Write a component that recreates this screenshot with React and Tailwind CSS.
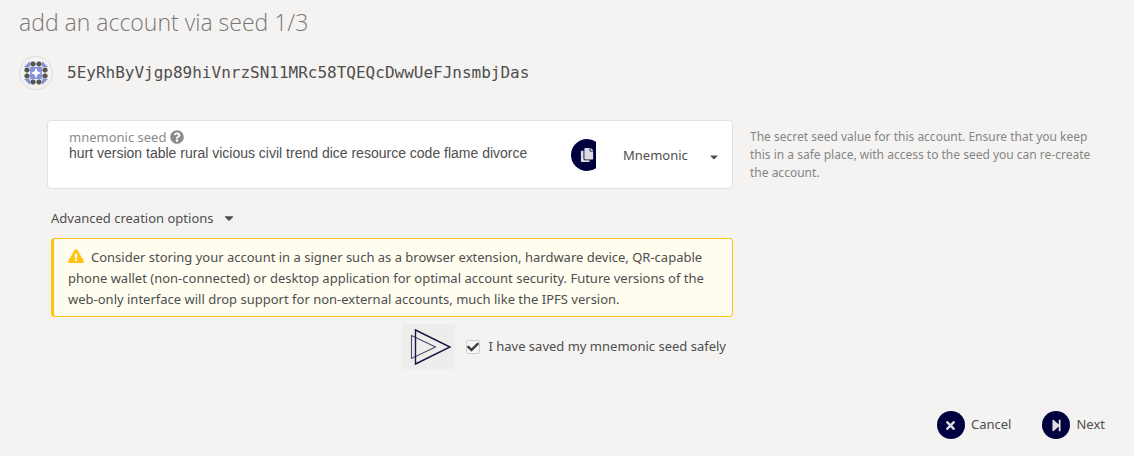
import { useState } from "react";
import {
  FaQuestionCircle,
  FaCopy,
  FaExclamationTriangle,
  FaTimes,
  FaStepForward,
  FaCaretDown,
  FaCheck,
} from "react-icons/fa";

const ADDRESS = "5EyRhByVjgp89hiVnrzSN11MRc58TQEQcDwwUeFJnsmbjDas";
const SEED = "hurt version table rural vicious civil trend dice resource code flame divorce";

const DOTS = [
  [9, 3], [15, 3], [3, 9], [21, 9],
  [3, 15], [21, 15], [9, 21], [15, 21],
];

function Identicon() {
  return (
    <span className="flex size-[34px] shrink-0 items-center justify-center rounded-full border border-[#dddddd] bg-[#f4f3f2]">
      <svg className="size-6" viewBox="0 0 24 24" aria-hidden="true">
        <g fill="#8593dc">
          <path d="M6 0V6H0Z" />
          <path d="M18 0V6H24Z" />
          <path d="M6 24V18H0Z" />
          <path d="M18 24V18H24Z" />
          <path d="M6 6H18V18H6Z" />
        </g>
        <g fill="#555555">
          {DOTS.map(([x, y]) => (
            <path key={`${x}-${y}`} d={`M${x - 1} ${y - 2.6}h2l1.6 1.6v2l-1.6 1.6h-2l-1.6 -1.6v-2Z`} />
          ))}
        </g>
        <path d="M12 6.8L13.6 10.4L17.2 12L13.6 13.6L12 17.2L10.4 13.6L6.8 12L10.4 10.4Z" fill="#fff" />
      </svg>
    </span>
  );
}

function TriangleLogo() {
  return (
    <span className="flex h-[45px] w-[53px] items-center justify-center bg-[#eeedec]">
      <svg className="h-[45px] w-[53px]" viewBox="0 0 53 45" fill="none" aria-hidden="true">
        <path d="M9.5 11.5L33.5 23L9.5 34.5Z" stroke="#4a4a66" strokeWidth="1.1" />
        <path d="M13.5 6L48 23L13.5 40Z" stroke="#151a45" strokeWidth="1.4" />
      </svg>
    </span>
  );
}

function ActionButton({ icon, children }) {
  return (
    <button type="button" className="flex items-center gap-[6px] text-[#4e4e4e]">
      <span className="flex size-7 items-center justify-center rounded-full bg-[#00003f] text-[#dcdce4]">
        {icon}
      </span>
      {children}
    </button>
  );
}

export default function App() {
  const [saved, setSaved] = useState(true);
  const [seed, setSeed] = useState(SEED);

  return (
    <main className="min-h-screen bg-[#f4f3f2] pt-1 pr-5 pb-4 pl-[19px] font-['Noto_Sans',sans-serif] text-[13px] text-[#4e4e4e]">
      <h1 className="font-['Open_Sans',sans-serif] text-[23px] leading-9 font-light text-[#777777]">
        add an account via seed 1/3
      </h1>

      <div className="mt-4 flex items-center gap-[14px]">
        <Identicon />
        <span className="font-['DejaVu_Sans_Mono',monospace] text-[16px] leading-6">{ADDRESS}</span>
      </div>

      <div className="mt-[30px] ml-7 grid grid-cols-[686fr_364fr] gap-x-[17px]">
        <div className="flex h-[69px] rounded border border-[#dde1eb] bg-white pl-[21px]">
          <div className="min-w-0 flex-1 pt-2">
            <label htmlFor="seed" className="flex items-center gap-1 leading-4 text-[#8b8b8b]">
              mnemonic seed
              <FaQuestionCircle className="size-[14px]" />
            </label>
            <input
              id="seed"
              value={seed}
              onChange={(e) => setSeed(e.target.value)}
              className="block w-full bg-transparent font-['Liberation_Sans',sans-serif] text-[14px] leading-4 outline-none"
            />
          </div>
          <div className="ml-1 flex w-[25px] items-center overflow-hidden">
            <button
              type="button"
              aria-label="Copy seed"
              className="flex size-8 shrink-0 items-center justify-center rounded-full bg-[#00003f] text-[#dcdce4]"
            >
              <FaCopy className="size-[14px]" />
            </button>
          </div>
          <div className="relative ml-[27px] flex w-[109px] items-center">
            <select
              aria-label="Seed type"
              className="w-full appearance-none bg-transparent text-[13px] leading-5 outline-none"
            >
              <option>Mnemonic</option>
              <option>Raw seed</option>
            </select>
            <FaCaretDown className="pointer-events-none absolute right-3 mt-1 size-3" />
          </div>
        </div>
        <p className="pt-2 pr-2 text-[12px] leading-[18px] text-[#858585]">
          The secret seed value for this account. Ensure that you keep this in a safe place, with access to the seed
          you can re-create the account.
        </p>

        <div className="pl-1">
          <button type="button" className="mt-[19px] flex items-center gap-2 leading-5">
            Advanced creation options
            <FaCaretDown className="size-[14px]" />
          </button>
          <article className="mt-[10px] rounded border border-l-[3px] border-[#ffc413] bg-[#fffdf0] px-[14px] pt-2 pb-[6px] leading-[21px]">
            <FaExclamationTriangle className="mr-[7px] inline size-4 align-[-2px] text-[#ffc413]" />
            Consider storing your account in a signer such as a browser extension, hardware device, QR-capable phone
            wallet (non-connected) or desktop application for optimal account security. Future versions of the web-only
            interface will drop support for non-external accounts, much like the IPFS version.
          </article>
          <div className="mt-[7px] flex items-center justify-end gap-[11px] pr-[7px]">
            <TriangleLogo />
            <label className="flex items-center gap-2">
              <span className="relative flex size-[14px]">
                <input
                  type="checkbox"
                  checked={saved}
                  onChange={(e) => setSaved(e.target.checked)}
                  className="size-[14px] appearance-none rounded-[2px] border border-[#d0d0d0] bg-[#f8f7f6]"
                />
                {saved && <FaCheck className="pointer-events-none absolute inset-px size-3 text-[#3f3f3f]" />}
              </span>
              I have saved my mnemonic seed safely
            </label>
          </div>
        </div>
      </div>

      <div className="mt-[42px] flex justify-end gap-[31px] pr-[9px]">
        <ActionButton icon={<FaTimes className="size-[13px]" />}>Cancel</ActionButton>
        <ActionButton icon={<FaStepForward className="size-[13px]" />}>Next</ActionButton>
      </div>
    </main>
  );
}
